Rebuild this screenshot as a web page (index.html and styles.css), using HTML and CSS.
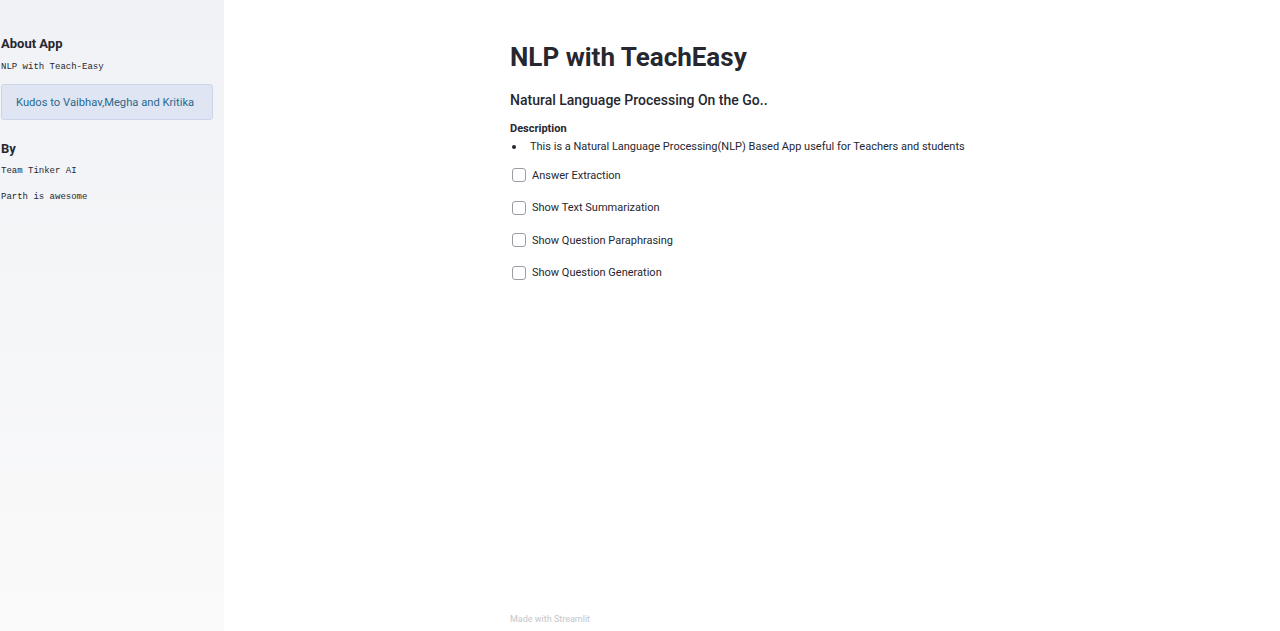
FILE: index.html
```html
<!DOCTYPE html>
<html>
<head>
<meta charset="utf-8">
<link rel="stylesheet" href="styles.css">
</head>
<body>
<div class="app">
  <aside class="sidebar">
    <h3 class="side-h">About App</h3>
    <p class="mono">NLP with Teach-Easy</p>
    <div class="info">Kudos to Vaibhav,Megha and Kritika</div>
    <h3 class="side-h by">By</h3>
    <p class="mono">Team Tinker AI</p>
    <p class="mono">Parth is awesome</p>
  </aside>
  <main class="main">
    <div class="block">
      <h1 class="title">NLP with TeachEasy</h1>
      <h3 class="subtitle">Natural Language Processing On the Go..</h3>
      <h4 class="desc-h">Description</h4>
      <ul class="list">
        <li>This is a Natural Language Processing(NLP) Based App useful for Teachers and students</li>
      </ul>
      <div class="checks">
        <label class="check"><span class="box"></span>Answer Extraction</label>
        <label class="check"><span class="box"></span>Show Text Summarization</label>
        <label class="check"><span class="box"></span>Show Question Paraphrasing</label>
        <label class="check"><span class="box"></span>Show Question Generation</label>
      </div>
      <div class="spacer"></div>
      <footer class="footer">Made with Streamlit</footer>
    </div>
  </main>
</div>
</body>
</html>
```
FILE: styles.css
```css
html, body {
  margin: 0;
  padding: 0;
  height: 100%;
}
body {
  font-family: Roboto, "Liberation Sans", sans-serif;
  color: #262730;
  background: #ffffff;
}
.app {
  display: flex;
  height: 631px;
}
.sidebar {
  width: 224px;
  flex: none;
  box-sizing: border-box;
  padding: 36px 11px 0 1px;
  background: linear-gradient(180deg, #f0f2f6 0%, #fafafa 100%);
}
.side-h {
  margin: 0;
  font-size: 13px;
  font-weight: 700;
  line-height: 16px;
  color: #262730;
}
.side-h.by {
  margin-top: 21px;
}
.mono {
  margin: 8px 0 0;
  font-family: "Liberation Mono", "DejaVu Sans Mono", monospace;
  font-size: 9px;
  line-height: 14px;
  color: #262730;
}
.by + .mono {
  margin-top: 7px;
}
.mono + .mono {
  margin-top: 12px;
}
.info {
  margin-top: 10px;
  height: 36px;
  box-sizing: border-box;
  display: flex;
  align-items: center;
  padding-left: 14px;
  background: #dfe5f2;
  border: 1px solid #ccd6ea;
  border-radius: 3px;
  color: #2a6a8e;
  font-size: 11.2px;
}
.main {
  flex: 1;
  display: flex;
  padding-left: 286px;
}
.block {
  width: 730px;
  display: flex;
  flex-direction: column;
  padding-top: 40px;
}
.title {
  margin: 0;
  font-size: 26px;
  font-weight: 700;
  line-height: 34px;
  color: #262730;
}
.subtitle {
  margin: 16px 0 0;
  font-size: 14px;
  font-weight: 500;
  line-height: 20px;
}
.desc-h {
  margin: 11px 0 0;
  font-size: 11px;
  font-weight: 700;
  line-height: 16px;
}
.list {
  margin: 2px 0 0;
  padding: 0;
  list-style: none;
  font-size: 11px;
  line-height: 16px;
}
.list li {
  display: flex;
  align-items: center;
}
.list li::before {
  content: "";
  width: 4px;
  height: 4px;
  border-radius: 50%;
  background: #262730;
  margin: 0 14px 0 2px;
  flex: none;
}
.checks {
  display: flex;
  flex-direction: column;
  gap: 14.5px;
  margin-top: 11px;
}
.check {
  display: flex;
  align-items: center;
  gap: 6px;
  height: 18px;
  font-size: 11px;
  color: #262730;
}
.box {
  width: 12px;
  height: 12px;
  margin-left: 2px;
  border: 1px solid #9b9ca3;
  border-radius: 3px;
  background: #fff;
}
.spacer {
  flex: 1;
}
.footer {
  font-size: 9px;
  color: #c4c6cc;
  line-height: 12px;
  padding-bottom: 6px;
}
```
